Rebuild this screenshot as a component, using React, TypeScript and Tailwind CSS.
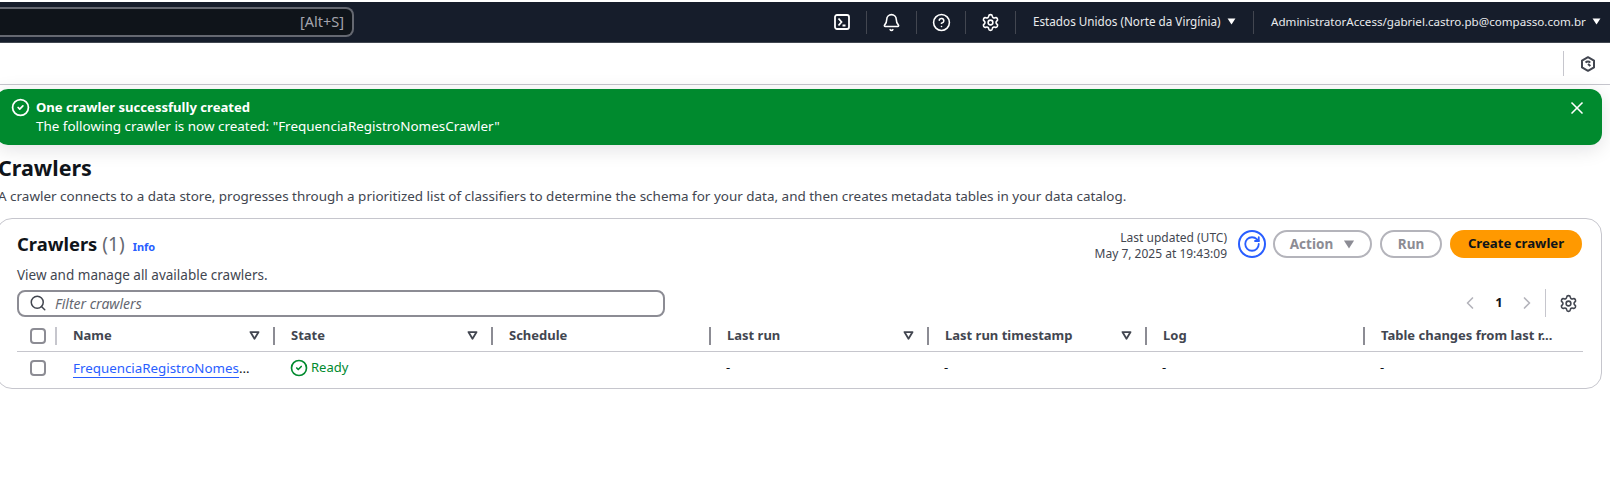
import { Bell, ChevronLeft, ChevronRight, CircleCheck, CircleHelp, RotateCw, Search, Settings, X } from "lucide-react";

const font = "font-['Noto_Sans',sans-serif]";

const columns = [
  { name: "Name", filter: true, cell: "link" },
  { name: "State", filter: true, cell: "state" },
  { name: "Schedule", filter: false, cell: "" },
  { name: "Last run", filter: true, cell: "-" },
  { name: "Last run timestamp", filter: true, cell: "-" },
  { name: "Log", filter: false, cell: "-" },
  { name: "Table changes from last r...", filter: false, cell: "-" },
];

function Caret({ className }: { className: string }) {
  return (
    <svg viewBox="0 0 10 8" className={className}>
      <path d="M0.5 0.5h9L5 7.5z" fill="currentColor" />
    </svg>
  );
}

function FilterCaret() {
  return (
    <svg viewBox="0 0 12 10" className="h-[9px] w-[11px] text-[#424650]">
      <path d="M1.5 1.2h9L6 8.6z" fill="none" stroke="currentColor" strokeWidth="2" strokeLinejoin="round" />
    </svg>
  );
}

function TerminalIcon() {
  return (
    <svg viewBox="0 0 16 16" className="h-4 w-4 text-white" fill="none" stroke="currentColor" strokeWidth="1.8">
      <rect x="1" y="1" width="14" height="14" rx="2" />
      <path d="M4.5 4.5 7.5 8l-3 3.5M8.5 11.5h3" />
    </svg>
  );
}

function NavSep() {
  return <div className="h-[23px] w-px shrink-0 bg-[#424650]" />;
}

function Checkbox() {
  return <div className="h-4 w-4 rounded-[4px] border-2 border-[#8c8c94] bg-white" />;
}

export default function App() {
  return (
    <div className={`${font} h-[482px] w-[1610px] overflow-hidden bg-white text-[14px] text-[#0f141a]`}>
      {/* top nav */}
      <div className="mt-[2px] flex h-[41px] items-center border-b border-[#414750] bg-[#161d2b]">
        <div className="flex h-[30px] w-[354px] shrink-0 items-center justify-end rounded-r-[8px] border-2 border-l-0 border-[#656871] bg-[#0f141a] pr-[8px] text-[14.5px] text-[#a4a4ad]">
          [Alt+S]
        </div>
        <div className="ml-[476px] flex w-[24px] shrink-0 justify-center"><TerminalIcon /></div>
        <div className="w-[12px] shrink-0" />
        <div className="flex shrink-0 items-center">
          <NavSep />
          <div className="flex w-[49px] justify-center"><Bell size={19} className="text-white" strokeWidth={2} /></div>
          <NavSep />
          <div className="flex w-[48px] justify-center"><CircleHelp size={19} className="text-white" strokeWidth={2} /></div>
          <NavSep />
          <div className="flex w-[49px] justify-center"><Settings size={19} className="text-white" strokeWidth={2} /></div>
          <NavSep />
        </div>
        <div className="ml-[17px] flex w-[220px] shrink-0 items-center text-[11.7px] whitespace-nowrap text-[#e9ebed]">
          Estados Unidos (Norte da Virgínia)
          <Caret className="ml-[6px] h-[7px] w-[9px] text-white" />
        </div>
        <NavSep />
        <div className="ml-[17px] flex shrink-0 items-center text-[11.6px] whitespace-nowrap text-[#e9ebed]">
          AdministratorAccess/gabriel.castro.pb@compasso.com.br
          <Caret className="ml-[6px] h-[7px] w-[9px] text-white" />
        </div>
      </div>

      {/* tools bar */}
      <div className="flex h-[42px] items-center justify-end border-b border-[#c6c6cd] pr-[14px]">
        <div className="mr-[16px] h-[25px] w-px bg-[#c6c6cd]" />
        <svg viewBox="0 0 16 16" className="h-4 w-4 text-[#424650]" fill="none" stroke="currentColor" strokeWidth="2">
          <path d="M8 1.2 14 4.6v6.8L8 14.8 2 11.4V4.6z" strokeLinejoin="round" />
          <path d="M5.6 6.6a3 3 0 0 1 4.6 0M8 8l2.4 2" />
        </svg>
      </div>

      {/* flash */}
      <div className="mt-[4px] -ml-[4px] flex h-[56px] w-[1606px] rounded-[12px] bg-[#008a2e] pt-[9px] pr-[15px] pl-[15px] text-white shadow-[0_4px_20px_rgba(0,7,22,0.12)]">
        <CircleCheck size={19} strokeWidth={2.2} />
        <div className="ml-[6px] flex-1 leading-[19px]">
          <div className="text-[13.1px] font-bold">One crawler successfully created</div>
          <div className="text-[13.45px]">The following crawler is now created: "FrequenciaRegistroNomesCrawler"</div>
        </div>
        <X size={20} strokeWidth={2} />
      </div>

      {/* page header */}
      <h1 className="mt-[8px] -ml-[2px] text-[21.5px] leading-[30px] font-bold">Crawlers</h1>
      <p className="mt-[3px] -ml-[2px] text-[13.46px] leading-[20px] whitespace-nowrap text-[#424650]">
        A crawler connects to a data store, progresses through a prioritized list of classifiers to determine the schema for your data, and then creates metadata tables in your data catalog.
      </p>

      {/* table card */}
      <div className="mt-[12px] -ml-[4px] h-[171px] w-[1606px] rounded-[16px] border border-[#c6c6cd] bg-white pt-[11px] pr-[19px] pl-[20px]">
        <div className="flex items-start justify-between">
          <div className="flex items-baseline pt-[1px]">
            <h2 className="text-[18.4px] leading-[26px] font-bold">Crawlers</h2>
            <span className="ml-[5px] text-[19px] leading-[26px] text-[#656871]">(1)</span>
            <span className="ml-[8px] text-[11px] font-bold text-[#295eff]">Info</span>
          </div>
          <div className="flex items-start">
            <div className="text-right text-[12px] leading-[16px] text-[#424650]">
              <div>Last updated (UTC)</div>
              <div>May 7, 2025 at 19:43:09</div>
            </div>
            <div className="ml-[11px] flex h-[28px] w-[28px] items-center justify-center rounded-full border-2 border-[#295eff] text-[#295eff]">
              <RotateCw size={18} strokeWidth={2.4} />
            </div>
            <div className="ml-[7px] flex h-[28px] w-[99px] items-center justify-center rounded-full border-2 border-[#b4b4bb] text-[13.5px] font-bold text-[#8c8c94]">
              Action
              <Caret className="ml-[10px] h-[9px] w-[12px] text-[#8c8c94]" />
            </div>
            <div className="ml-[8px] flex h-[28px] w-[62px] items-center justify-center rounded-full border-2 border-[#b4b4bb] text-[13.5px] font-bold text-[#8c8c94]">
              Run
            </div>
            <div className="ml-[8px] flex h-[28px] w-[132px] items-center justify-center rounded-full bg-[#ff9900] text-[13.2px] font-bold text-[#0f141a]">
              Create crawler
            </div>
          </div>
        </div>

        <div className="mt-[4px] text-[13.5px] leading-[18px] text-[#424650]">View and manage all available crawlers.</div>

        <div className="mt-[5px] flex items-center justify-between">
          <div className="flex h-[27px] w-[648px] items-center rounded-[8px] border-2 border-[#8c8c94] pl-[10px] text-[14px] text-[#656871] italic">
            <Search size={18} strokeWidth={2} className="text-[#424650]" />
            <span className="ml-[8px]">Filter crawlers</span>
          </div>
          <div className="flex items-center pr-[4px]">
            <ChevronLeft size={20} strokeWidth={2} className="text-[#b4b4bb]" />
            <span className="ml-[14px] w-[10px] text-center text-[13px] font-bold text-[#0f141a]">1</span>
            <ChevronRight size={20} strokeWidth={2} className="ml-[13px] text-[#b4b4bb]" />
            <div className="ml-[8px] h-[28px] w-px bg-[#c6c6cd]" />
            <Settings size={19} strokeWidth={2} className="ml-[13px] text-[#424650]" />
          </div>
        </div>

        {/* table */}
        <div className="mt-[3px] grid w-[1566px] grid-cols-[38px_218px_218px_218px_218px_218px_218px_220px] text-[13px]">
          <div className="flex h-[32px] items-center border-b border-[#c6c6cd] pl-[13px]"><Checkbox /></div>
          {columns.map((col, i) => (
            <div key={col.name} className="flex h-[32px] items-center border-b border-[#c6c6cd]">
              <div className={`h-[18px] w-[2px] ${i === 0 ? "bg-[#c6c6cd]" : "bg-[#8c8c94]"}`} />
              <span className="ml-[16px] flex-1 font-bold whitespace-nowrap text-[#424650]">{col.name}</span>
              {col.filter && <span className="mr-[13px]"><FilterCaret /></span>}
            </div>
          ))}
          <div className="flex h-[32px] items-center pl-[13px]"><Checkbox /></div>
          {columns.map((col) => (
            <div key={col.name} className={`flex h-[32px] items-center whitespace-nowrap ${col.cell === "link" ? "pl-[18px]" : "pl-[17px]"}`}>
              {col.cell === "link" && (
                <span className="text-[13.35px]"><span className="border-b border-[#295eff] text-[#295eff]">FrequenciaRegistroNomes</span>…</span>
              )}
              {col.cell === "state" && (
                <span className="flex items-center text-[#008a2e]">
                  <CircleCheck size={18} strokeWidth={2.2} />
                  <span className="ml-[3px]">Ready</span>
                </span>
              )}
              {col.cell === "-" && "-"}
            </div>
          ))}
        </div>
      </div>
    </div>
  );
}
